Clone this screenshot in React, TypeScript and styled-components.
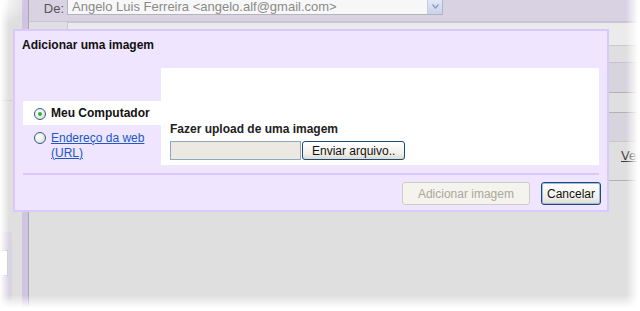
import styled, { createGlobalStyle } from "styled-components";

const GlobalStyle = createGlobalStyle`
    html, body {
        margin: 0;
        padding: 0;
        background: #fff;
    }
    body {
        font-family: "Liberation Sans", Arial, sans-serif;
        font-size: 12px;
    }
`

export default function App() {
    return (
        <>
            <GlobalStyle/>
            <StyledPage>
                <StyledSidebar>
                    <StyledSideLine/>
                    <StyledSidePanel>
                        <StyledSideInput/>
                    </StyledSidePanel>
                </StyledSidebar>

                <StyledCompose>
                    <StyledFromRow>
                        <StyledLabel>De:</StyledLabel>
                        <StyledSelect>
                            <span>Angelo Luis Ferreira &lt;angelo.alf@gmail.com&gt;</span>
                            <StyledSelectArrow>
                                <svg width="7" height="5" viewBox="0 0 7 5">
                                    <path d="M0.5 0.5 L3.5 4 L6.5 0.5" fill="none" stroke="#8a98b8" strokeWidth="1.2"/>
                                </svg>
                            </StyledSelectArrow>
                        </StyledSelect>
                    </StyledFromRow>
                    <StyledToRow>
                        <StyledClippedLabel>
                            <StyledLabel $low>P</StyledLabel>
                        </StyledClippedLabel>
                        <StyledToInput/>
                    </StyledToRow>
                    <StyledBand/>
                    <StyledGap/>
                    <StyledBand $tall/>
                    <StyledLinkRow>
                        <StyledViewLink>Ver</StyledViewLink>
                    </StyledLinkRow>
                </StyledCompose>

                <StyledDialog>
                    <StyledDialogTitle>Adicionar uma imagem</StyledDialogTitle>
                    <StyledDialogBody>
                        <StyledTabs>
                            <StyledTab $active>
                                <StyledRadio $checked/>
                                <StyledTabLabel>Meu Computador</StyledTabLabel>
                            </StyledTab>
                            <StyledTab>
                                <StyledRadio/>
                                <StyledTabLink>Endereço da web (URL)</StyledTabLink>
                            </StyledTab>
                        </StyledTabs>
                        <StyledPanel>
                            <StyledPanelTitle>Fazer upload de uma imagem</StyledPanelTitle>
                            <StyledFileRow>
                                <StyledFileInput/>
                                <StyledButton>Enviar arquivo..</StyledButton>
                            </StyledFileRow>
                        </StyledPanel>
                    </StyledDialogBody>
                    <StyledDivider/>
                    <StyledFooter>
                        <StyledButton $disabled $wide>Adicionar imagem</StyledButton>
                        <StyledButton $focus>Cancelar</StyledButton>
                    </StyledFooter>
                </StyledDialog>
            </StyledPage>
        </>
    )
}

const StyledPage = styled.div`
    position: relative;
    width: 640px;
    height: 311px;
    overflow: hidden;
    display: flex;
    background: #dfdfdf;

    &::after {
        content: "";
        position: absolute;
        inset: 0;
        pointer-events: none;
        background:
            linear-gradient(to left, #fff 2px, rgba(255, 255, 255, 0) 14px),
            linear-gradient(to right, #fff 0, rgba(255, 255, 255, 0) 9px),
            linear-gradient(to top, #fff 3px, rgba(255, 255, 255, 0) 16px),
            radial-gradient(circle at 0 0, #fff 0, rgba(255, 255, 255, 0) 26px);
    }
`

const StyledSidebar = styled.div`
    width: 22px;
    flex-shrink: 0;
    display: flex;
    flex-direction: column;
`

const StyledSideLine = styled.div`
    height: 100px;
    border-bottom: 1px solid #cfcfcf;
    margin-bottom: 131px;
`

const StyledSidePanel = styled.div`
    width: 12px;
    height: 68px;
    background: #d9d4e2;
    border-radius: 0 3px 0 0;
    padding-top: 18px;
    box-sizing: border-box;
`

const StyledSideInput = styled.div`
    width: 7px;
    height: 24px;
    background: #fff;
    border: 1px solid #c8c8c8;
    border-left: none;
`

const StyledCompose = styled.div`
    flex: 1;
    display: flex;
    flex-direction: column;
    border-left: 6px solid #cfc4e2;
    box-shadow: inset 1px 0 0 #a9a4b0;
    padding-left: 1px;
`

const StyledFromRow = styled.div`
    height: 21px;
    display: flex;
    align-items: flex-start;
    background: #d9d2e3;
    border-bottom: 1px solid #c9bee3;
`

const StyledLabel = styled.div<{ $low?: boolean }>`
    width: 35px;
    padding-right: 3px;
    text-align: right;
    font-size: 13px;
    color: #555;
    line-height: 15px;
    margin-top: ${({$low}) => $low ? '4px' : '1px'};
`

const StyledClippedLabel = styled.div`
    height: 7px;
    overflow: hidden;
`

const StyledSelect = styled.div`
    width: 376px;
    height: 17px;
    margin-top: -2px;
    display: flex;
    align-items: center;
    justify-content: space-between;
    background: #f7f7f7;
    border: 1px solid #b4b4bc;
    font-size: 13px;
    color: #8a8a8a;
    padding-left: 4px;
    box-sizing: border-box;
`

const StyledSelectArrow = styled.div`
    width: 14px;
    height: 15px;
    display: flex;
    align-items: center;
    justify-content: center;
    background: linear-gradient(#e2e9f8, #c7d3ee);
    border-left: 1px solid #c3cde3;
`

const StyledToRow = styled.div`
    height: 40px;
    display: flex;
    align-items: flex-start;
`

const StyledToInput = styled.div`
    flex: 1;
    height: 22px;
    background: #ebebeb;
    border: 1px solid #c9c9c9;
    border-right: none;
`

const StyledBand = styled.div<{ $tall?: boolean }>`
    height: ${({$tall}) => $tall ? '28px' : '29px'};
    background: #d8d4de;
    border-top: 1px solid ${({$tall}) => $tall ? '#b3b3b3' : '#c8bfdc'};
    border-bottom: 1px solid ${({$tall}) => $tall ? '#c9c9c9' : '#b3b3b3'};
`

const StyledGap = styled.div`
    height: 19px;
`

const StyledLinkRow = styled.div`
    height: 39px;
    border-bottom: 1px solid #b3b3b3;
    padding-left: 592px;
    padding-top: 6px;
    box-sizing: border-box;
`

const StyledViewLink = styled.span`
    font-size: 13px;
    color: #3a3a3a;
    text-decoration: underline;
`

const StyledDialog = styled.div`
    position: absolute;
    left: 13px;
    top: 29px;
    width: 596px;
    height: 183px;
    box-sizing: border-box;
    background: #efe5fe;
    border: 2px solid #dac8fb;
    padding: 0 8px;
    display: flex;
    flex-direction: column;
`

const StyledDialogTitle = styled.div`
    font-weight: 700;
    font-size: 12px;
    color: #111;
    height: 37px;
    line-height: 28px;
    margin-left: -1px;
`

const StyledDialogBody = styled.div`
    display: flex;
    height: 97px;
`

const StyledTabs = styled.div`
    width: 138px;
    display: flex;
    flex-direction: column;
    padding-top: 33px;
    gap: 6px;
`

const StyledTab = styled.div<{ $active?: boolean }>`
    display: flex;
    align-items: flex-start;
    gap: 5px;
    padding: ${({$active}) => $active ? '6px 0 0 11px' : '0 0 0 11px'};
    height: ${({$active}) => $active ? '24px' : 'auto'};
    box-sizing: border-box;
    background: ${({$active}) => $active ? '#fff' : 'transparent'};
`

const StyledRadio = styled.span<{ $checked?: boolean }>`
    width: 12px;
    height: 12px;
    flex-shrink: 0;
    margin-top: 1px;
    border-radius: 50%;
    border: 1px solid #2f5d8a;
    box-sizing: border-box;
    background: radial-gradient(circle at 35% 35%, #fff 0, #f2f2ee 40%, #d4d2c8 100%);
    display: flex;
    align-items: center;
    justify-content: center;

    &::after {
        content: "";
        width: 4px;
        height: 4px;
        border-radius: 50%;
        background: ${({$checked}) => $checked ? '#30b030' : 'transparent'};
    }
`

const StyledTabLabel = styled.span`
    font-weight: 700;
    font-size: 12px;
    color: #111;
    line-height: 13px;
`

const StyledTabLink = styled.span`
    font-size: 12px;
    color: #2158c8;
    text-decoration: underline;
    line-height: 15px;
    width: 100px;
`

const StyledPanel = styled.div`
    flex: 1;
    background: #fff;
    display: flex;
    flex-direction: column;
    justify-content: flex-end;
    padding: 0 0 5px 9px;
    gap: 5px;
`

const StyledPanelTitle = styled.div`
    font-weight: 700;
    font-size: 12px;
    color: #222;
`

const StyledFileRow = styled.div`
    display: flex;
    gap: 1px;
`

const StyledFileInput = styled.div`
    width: 131px;
    height: 19px;
    box-sizing: border-box;
    background: #ebe9e1;
    border: 1px solid #8fa7c0;
`

const StyledButton = styled.button<{ $disabled?: boolean; $focus?: boolean; $wide?: boolean }>`
    height: ${({$wide, $focus}) => ($wide || $focus) ? '23px' : '19px'};
    padding: 0 ${({$wide, $focus}) => $wide ? '15px' : $focus ? '5px' : '9px'};
    font-family: "Liberation Sans", Arial, sans-serif;
    font-size: 12px;
    color: ${({$disabled}) => $disabled ? '#aca899' : '#111'};
    background: ${({$disabled}) => $disabled ? '#f4f3ee' : 'linear-gradient(#ffffff, #f0efe8 70%, #dcdad0)'};
    border: 1px solid ${({$disabled}) => $disabled ? '#cfcdc2' : '#1c4a7a'};
    border-radius: 3px;
    box-shadow: ${({$focus}) => $focus ? 'inset 0 0 0 1px #9dbbe0' : 'none'};
    box-sizing: border-box;
    cursor: default;
`

const StyledDivider = styled.div`
    height: 2px;
    background: #dac8fb;
    margin-top: 8px;
`

const StyledFooter = styled.div`
    display: flex;
    justify-content: flex-end;
    gap: 11px;
    padding-top: 7px;
    margin-right: -2px;
`
